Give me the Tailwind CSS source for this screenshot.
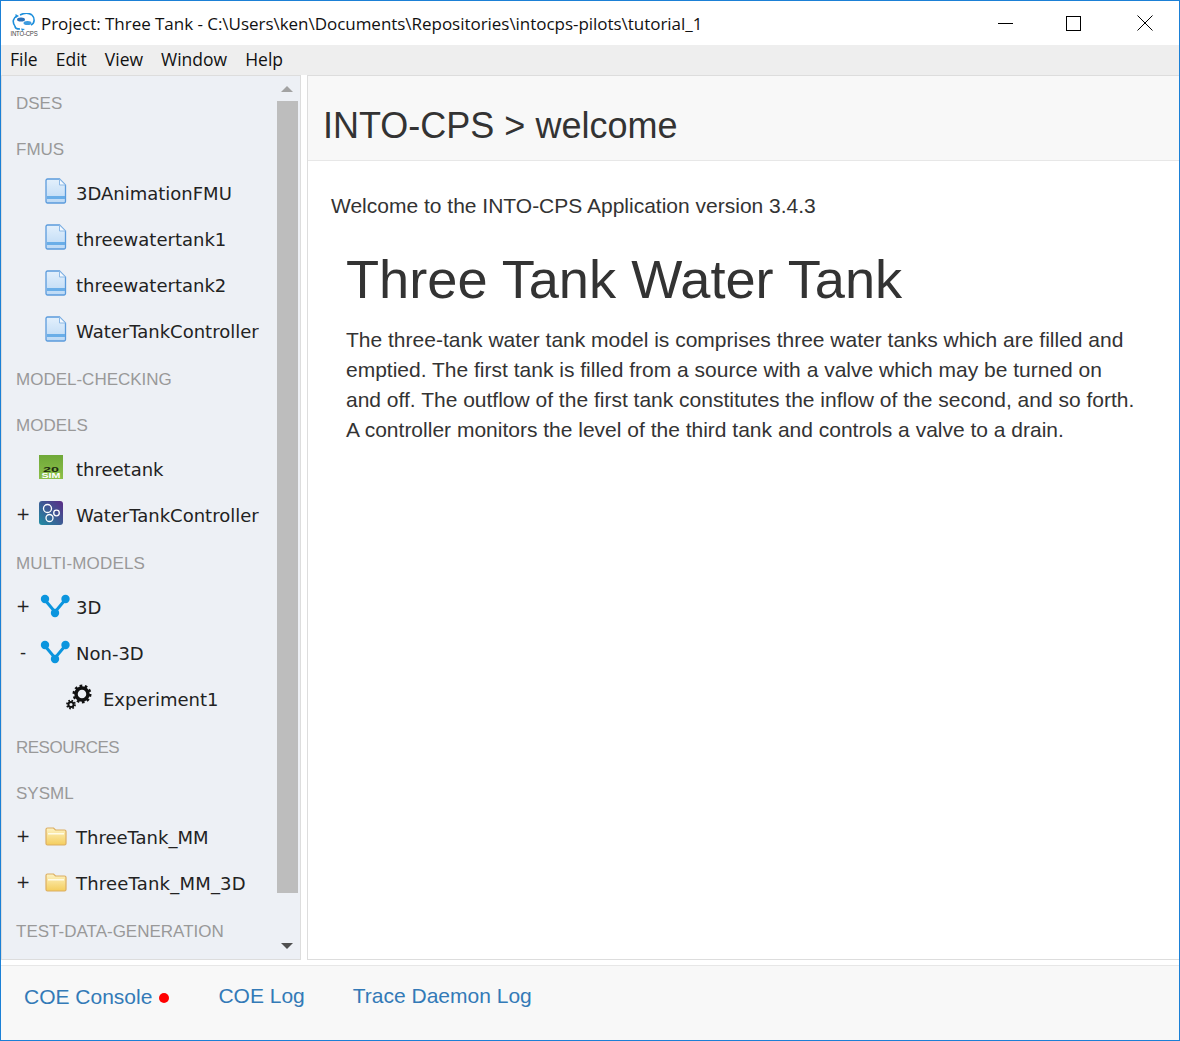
<!DOCTYPE html>
<html lang="en">
<head>
    <meta charset="UTF-8">
    <title>INTO-CPS</title>
    <script src="https://cdn.jsdelivr.net/npm/@tailwindcss/browser@4"></script>
</head>
<body class="bg-white">
<svg class="absolute h-0 w-0">
    <defs>
        <linearGradient id="file-fill" x1="0" y1="0" x2="0" y2="1"><stop offset="0" stop-color="#e3f0fc"/><stop offset="1" stop-color="#bcd9f5"/></linearGradient>
        <linearGradient id="folder-fill" x1="0" y1="0" x2="0" y2="1"><stop offset="0" stop-color="#fdf3c4"/><stop offset="1" stop-color="#f4cd5c"/></linearGradient>
        <linearGradient id="sim-fill" x1="0" y1="1" x2="1" y2="0"><stop offset="0" stop-color="#1f8ea3"/><stop offset="1" stop-color="#5b2a86"/></linearGradient>
        <linearGradient id="twenty-fill" x1="0" y1="0" x2="0" y2="1"><stop offset="0" stop-color="#6fa838"/><stop offset="1" stop-color="#8cc04a"/></linearGradient>
        <symbol id="file" viewBox="0 0 22 26">
            <path d="M2.500 1h12l6 6v16.500a1.500 1.500 0 0 1-1.500 1.500H2.500A1.500 1.500 0 0 1 1 23.500V2.500A1.500 1.500 0 0 1 2.500 1z" fill="url(#file-fill)" stroke="#5b9bdc" stroke-width="1.300"/>
            <path d="M14.500 1v6h6z" fill="#f4f9fe" stroke="#8db9e6" stroke-width="1"/>
            <rect x="2" y="18" width="18" height="3" fill="#6aaee8"/>
        </symbol>
        <symbol id="folder" viewBox="0 0 22 20">
            <path d="M1 3.500A1.500 1.500 0 0 1 2.500 2h6l2 2h9A1.500 1.500 0 0 1 21 5.500v12a1.500 1.500 0 0 1-1.500 1.500h-17A1.500 1.500 0 0 1 1 17.500z" fill="url(#folder-fill)" stroke="#dcae62" stroke-width="1.200"/>
            <path d="M3 7h16v1.500H3z" fill="#fffbe6"/>
        </symbol>
        <symbol id="mm" viewBox="0 0 32 26">
            <path d="M6 6l10 12L26 6" fill="none" stroke="#0b95de" stroke-width="3"/>
            <circle cx="6" cy="5" r="4.200" fill="#0b95de"/>
            <circle cx="26.500" cy="5" r="4.200" fill="#0b95de"/>
            <circle cx="16" cy="19" r="4.200" fill="#0b95de"/>
        </symbol>
        <symbol id="tree-gears" viewBox="0 0 26 26">
            <circle cx="16" cy="10" r="6" fill="none" stroke="#111" stroke-width="3.500"/>
            <circle cx="16" cy="10" r="8.200" fill="none" stroke="#111" stroke-width="2.600" stroke-dasharray="2.600 2.550"/>
            <circle cx="5" cy="20.500" r="2.600" fill="none" stroke="#111" stroke-width="2"/>
            <circle cx="5" cy="20.500" r="4" fill="none" stroke="#111" stroke-width="1.800" stroke-dasharray="1.600 1.540"/>
        </symbol>
    </defs>
</svg>

<div class="flex h-[1041px] w-[1180px] flex-col overflow-hidden border border-[#1b80d6] font-['Liberation_Sans',sans-serif]">

    <!-- title bar -->
    <header class="flex h-[44px] shrink-0 items-center bg-white">
        <div class="flex w-[40px] flex-col items-center pl-[6px] pt-[4px]">
            <svg class="h-[18px] w-[24px]" viewBox="0 0 24 18">
                <path d="M3 13C0 9 1 5 5 3" fill="none" stroke="#1d8fdc" stroke-width="1.600"/>
                <path d="M7 3l-3.500-2v4zM9 15.500l4 .5-3 2z" fill="#1d8fdc"/>
                <path d="M8 16C4 16 3 15 3 13M20 2c3 3 3 8-1 10" fill="none" stroke="#1d8fdc" stroke-width="1.600"/>
                <path d="M8 2c4-2 9-2 12 0" fill="none" stroke="#1d8fdc" stroke-width="1.600"/>
                <ellipse cx="9" cy="6.500" rx="4" ry="2" fill="#2a6fb8"/>
                <ellipse cx="15.500" cy="10" rx="4" ry="2" fill="#3d9be0"/>
            </svg>
            <span class="scale-y-[1.3] text-[6px] leading-[7px] tracking-[-0.2px] text-[#444]">INTO-CPS</span>
        </div>
        <span class="pt-px font-['Open_Sans',sans-serif] text-[17px] tracking-[-0.035px] text-[#111]">Project: Three Tank - C:\Users\ken\Documents\Repositories\intocps-pilots\tutorial_1</span>
        <div class="ml-auto flex h-full">
            <div class="flex w-[62px] items-center justify-center"><span class="block h-px w-[15px] bg-black"></span></div>
            <div class="flex w-[75px] items-center justify-center"><span class="block h-[15px] w-[15px] border border-black"></span></div>
            <div class="flex w-[68px] items-center justify-center">
                <svg class="h-[16px] w-[16px]" viewBox="0 0 16 16"><path d="M.5.500l15 15M15.500.500l-15 15" stroke="#000" stroke-width="1" fill="none"/></svg>
            </div>
        </div>
    </header>

    <!-- menu bar -->
    <nav class="flex h-[30px] shrink-0 items-center gap-[18px] bg-[#eeeeee] pb-px pl-[9px] font-['Open_Sans',sans-serif] text-[17.5px] text-[#111]">
        <span>File</span><span>Edit</span><span>View</span><span>Window</span><span>Help</span>
    </nav>

    <div class="flex min-h-0 flex-1 bg-white">
        <!-- project tree -->
        <aside class="flex w-[300px] shrink-0 border border-[#dddddd] bg-[#edf0f5]">
            <div class="min-w-0 flex-1 pt-[3px] font-['DejaVu_Sans',sans-serif] text-[18px] text-[#222]">
                <h2 class="mt-1 flex h-[42px] items-center pl-[14px] font-['Liberation_Sans',sans-serif] text-[17px] text-[#999]">DSES</h2>
                <h2 class="mt-1 flex h-[42px] items-center pl-[14px] font-['Liberation_Sans',sans-serif] text-[17px] text-[#999]">FMUS</h2>
                <div class="flex h-[46px] items-center pb-[2px]"><span class="w-[43px]"></span><svg class="mb-[4px] mr-[9px] h-[26px] w-[22px]"><use href="#file"/></svg><span>3DAnimationFMU</span></div>
                <div class="flex h-[46px] items-center pb-[2px]"><span class="w-[43px]"></span><svg class="mb-[4px] mr-[9px] h-[26px] w-[22px]"><use href="#file"/></svg><span>threewatertank1</span></div>
                <div class="flex h-[46px] items-center pb-[2px]"><span class="w-[43px]"></span><svg class="mb-[4px] mr-[9px] h-[26px] w-[22px]"><use href="#file"/></svg><span>threewatertank2</span></div>
                <div class="flex h-[46px] items-center pb-[2px]"><span class="w-[43px]"></span><svg class="mb-[4px] mr-[9px] h-[26px] w-[22px]"><use href="#file"/></svg><span>WaterTankController</span></div>
                <h2 class="mt-1 flex h-[42px] items-center pl-[14px] font-['Liberation_Sans',sans-serif] text-[17px] text-[#999]">MODEL-CHECKING</h2>
                <h2 class="mt-1 flex h-[42px] items-center pl-[14px] font-['Liberation_Sans',sans-serif] text-[17px] text-[#999]">MODELS</h2>
                <div class="flex h-[46px] items-center pb-[2px]">
                    <span class="w-[37px]"></span>
                    <svg class="mb-[4px] mr-[13px] h-[24px] w-[24px]" viewBox="0 0 24 24">
                        <rect width="24" height="24" fill="url(#twenty-fill)"/>
                        <text x="12" y="16.500" text-anchor="middle" font-family="Liberation Sans" font-size="7" font-weight="700" textLength="16" lengthAdjust="spacingAndGlyphs" fill="#1d2b12">20</text>
                        <text x="12" y="22.800" text-anchor="middle" font-family="Liberation Sans" font-size="7" font-weight="700" textLength="19" lengthAdjust="spacingAndGlyphs" fill="#ffffff">SIM</text>
                    </svg>
                    <span>threetank</span>
                </div>
                <div class="flex h-[46px] items-center pb-[2px]">
                    <span class="w-[37px] pl-[14px] text-[17px]">+</span>
                    <svg class="mb-[4px] mr-[13px] h-[24px] w-[24px]" viewBox="0 0 24 24">
                        <rect width="24" height="24" rx="3" fill="url(#sim-fill)"/>
                        <g fill="none" stroke="#fff" stroke-width="1.300"><circle cx="8.500" cy="7.500" r="4"/><circle cx="17.500" cy="12" r="2.800"/><circle cx="10.500" cy="17" r="3.500"/></g>
                    </svg>
                    <span>WaterTankController</span>
                </div>
                <h2 class="mt-1 flex h-[42px] items-center pl-[14px] font-['Liberation_Sans',sans-serif] text-[17px] tracking-[0.15px] text-[#999]">MULTI-MODELS</h2>
                <div class="flex h-[46px] items-center pb-[2px]"><span class="w-[37px] pl-[14px] text-[17px]">+</span><svg class="mr-[5px] h-[26px] w-[32px]"><use href="#mm"/></svg><span>3D</span></div>
                <div class="flex h-[46px] items-center pb-[2px]"><span class="w-[37px] pl-[18px] text-[17px]">-</span><svg class="mr-[5px] h-[26px] w-[32px]"><use href="#mm"/></svg><span>Non-3D</span></div>
                <div class="flex h-[46px] items-center pb-[2px]"><span class="w-[64px]"></span><svg class="mb-[5px] mr-[11px] h-[26px] w-[26px]"><use href="#tree-gears"/></svg><span>Experiment1</span></div>
                <h2 class="mt-1 flex h-[42px] items-center pl-[14px] font-['Liberation_Sans',sans-serif] text-[17px] tracking-[-0.5px] text-[#999]">RESOURCES</h2>
                <h2 class="mt-1 flex h-[42px] items-center pl-[14px] font-['Liberation_Sans',sans-serif] text-[17px] text-[#999]">SYSML</h2>
                <div class="flex h-[46px] items-center pb-[2px]"><span class="w-[43px] pl-[14px] text-[17px]">+</span><svg class="mb-[3px] mr-[9px] h-[20px] w-[22px]"><use href="#folder"/></svg><span>ThreeTank_MM</span></div>
                <div class="flex h-[46px] items-center pb-[2px]"><span class="w-[43px] pl-[14px] text-[17px]">+</span><svg class="mb-[3px] mr-[9px] h-[20px] w-[22px]"><use href="#folder"/></svg><span class="tracking-[0.2px]">ThreeTank_MM_3D</span></div>
                <h2 class="mt-1 flex h-[42px] items-center pl-[14px] font-['Liberation_Sans',sans-serif] text-[17px] text-[#999]">TEST-DATA-GENERATION</h2>
            </div>
            <!-- scrollbar -->
            <div class="flex w-[23px] shrink-0 flex-col">
                <div class="flex h-[25px] items-center justify-center pr-[3px]"><span class="h-0 w-0 border-x-[6px] border-b-[6px] border-x-transparent border-b-[#a3a3a3]"></span></div>
                <div class="mr-[2px] h-[792px] bg-[#bdbdbd]"></div>
                <div class="flex flex-1 items-end justify-center pb-[10px] pr-[3px]"><span class="h-0 w-0 border-x-[6px] border-t-[6px] border-x-transparent border-t-[#505050]"></span></div>
            </div>
        </aside>

        <!-- main panel -->
        <main class="ml-[6px] flex min-w-0 flex-1 flex-col border-y border-l border-[#dddddd]">
            <div class="flex h-[85px] shrink-0 items-center border-b border-[#e7e7e7] bg-[#f8f8f8] pl-[15px] pt-[16px] text-[36px] text-[#333]">INTO-CPS &gt; welcome</div>
            <div class="pl-[23px] pr-[39px] pt-[30px] text-[21px] leading-[30px] text-[#333]">
                <p>Welcome to the INTO-CPS Application version 3.4.3</p>
                <div class="pl-[15px]">
                    <h1 class="mb-[15px] mt-[27px] text-[54.2px] leading-[62px]">Three Tank Water Tank</h1>
                    <p>The three-tank water tank model is comprises three water tanks which are filled and emptied. The first tank is filled from a source with a valve which may be turned on and off. The outflow of the first tank constitutes the inflow of the second, and so forth. A controller monitors the level of the third tank and controls a valve to a drain.</p>
                </div>
            </div>
        </main>
    </div>

    <!-- bottom tabs -->
    <footer class="mt-[5px] flex h-[75px] shrink-0 items-start gap-[48px] border-t border-[#e7e7e7] bg-[#f8f8f8] pl-[23px] pt-[15px] text-[21px] text-[#337ab7]">
        <span class="mr-px flex items-center gap-[7px]">COE Console <span class="mt-[3px] h-[10px] w-[10px] rounded-full bg-[#ff0000]"></span></span>
        <span class="-mt-px">COE Log</span>
        <span class="-mt-px">Trace Daemon Log</span>
    </footer>
</div>
</body>
</html>
